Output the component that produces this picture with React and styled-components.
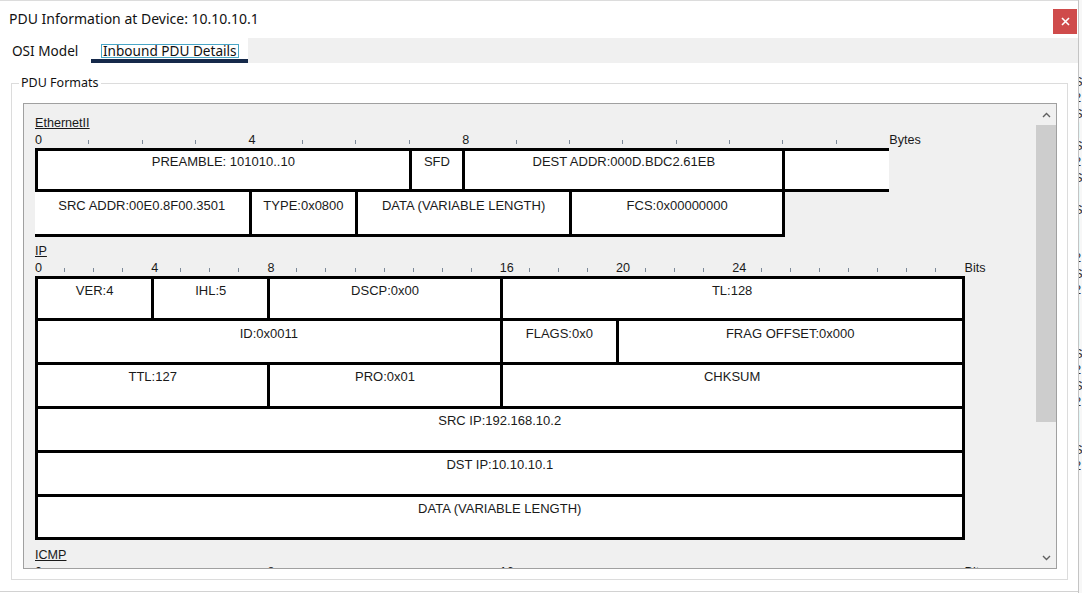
import React from "react";
import styled, { createGlobalStyle } from "styled-components";

const GlobalStyle = createGlobalStyle`
  html, body {
    margin: 0;
    padding: 0;
    background: #ffffff;
  }
  * {
    box-sizing: border-box;
  }
`;

const ethernet = {
  name: "EthernetII",
  units: 16,
  unitWidth: 53.4,
  unitName: "Bytes",
  labels: [0, 4, 8],
  rows: [
    {
      height: 41,
      pad: 4,
      cells: [
        { span: 7, text: "PREAMBLE: 101010..10" },
        { span: 1, text: "SFD" },
        { span: 6, text: "DEST ADDR:000D.BDC2.61EB" },
        { span: 2, text: "", openRight: true },
      ],
    },
    {
      height: 45,
      pad: 7,
      cells: [
        { span: 4, text: "SRC ADDR:00E0.8F00.3501", openLeft: true },
        { span: 2, text: "TYPE:0x0800" },
        { span: 4, text: "DATA (VARIABLE LENGTH)" },
        { span: 4, text: "FCS:0x00000000" },
      ],
    },
  ],
};

const ip = {
  name: "IP",
  units: 32,
  unitWidth: 29.06,
  unitName: "Bits",
  labels: [0, 4, 8, 16, 20, 24],
  rows: [
    {
      height: 42,
      pad: 5,
      cells: [
        { span: 4, text: "VER:4" },
        { span: 4, text: "IHL:5" },
        { span: 8, text: "DSCP:0x00" },
        { span: 16, text: "TL:128", last: true },
      ],
    },
    {
      height: 44,
      pad: 6,
      cells: [
        { span: 16, text: "ID:0x0011" },
        { span: 4, text: "FLAGS:0x0" },
        { span: 12, text: "FRAG OFFSET:0x000", last: true },
      ],
    },
    {
      height: 44,
      pad: 5,
      cells: [
        { span: 8, text: "TTL:127" },
        { span: 8, text: "PRO:0x01" },
        { span: 16, text: "CHKSUM", last: true },
      ],
    },
    { height: 44, pad: 5, cells: [{ span: 32, text: "SRC IP:192.168.10.2", last: true }] },
    { height: 44, pad: 5, cells: [{ span: 32, text: "DST IP:10.10.10.1", last: true }] },
    { height: 43, pad: 5, cells: [{ span: 32, text: "DATA (VARIABLE LENGTH)", last: true }] },
  ],
};

// only the heading and the top of the ruler are in view
const icmp = {
  name: "ICMP",
  units: 32,
  unitWidth: 29.06,
  unitName: "Bits",
  labels: [0, 8, 16],
  rows: [],
};

const Page = styled.div`
  display: flex;
  width: 1082px;
  height: 593px;
  overflow: hidden;
`;

const Window = styled.div`
  width: 1078px;
  height: 593px;
  display: flex;
  flex-direction: column;
  background: #ffffff;
  border-top: 1px solid #dcdcdc;
`;

const TitleBar = styled.div`
  height: 37px;
  display: flex;
  justify-content: space-between;
  align-items: flex-start;
  padding: 0 1px 0 9px;
`;

const Title = styled.div`
  font-family: "Noto Sans", "Open Sans", sans-serif;
  font-size: 14px;
  line-height: 18px;
  margin-top: 9px;
  color: #111111;
`;

const CloseButton = styled.button`
  width: 24px;
  height: 25px;
  margin-top: 8px;
  border: none;
  padding: 0;
  background: #cf4b4b;
  display: flex;
  align-items: center;
  justify-content: center;
`;

const TabBar = styled.div`
  height: 25px;
  display: flex;
  font-family: "Noto Sans", "Open Sans", sans-serif;
  font-size: 13.6px;
  color: #111111;
`;

const Tab = styled.div`
  width: ${(p) => p.$width}px;
  height: 25px;
  padding-left: ${(p) => p.$pad}px;
  padding-top: 5px;
  line-height: 15px;
  background: #ffffff;
  border-bottom: ${(p) => (p.$active ? "4px solid #15294a" : "none")};
`;

const FocusText = styled.span`
  display: inline-block;
  border: 1px solid #4aa6c6;
  padding: 0 1px 0 1px;
  margin-top: 1px;
  line-height: 11px;
  height: 14px;
`;

const TabFiller = styled.div`
  flex: 1;
  background: #f0f0f0;
`;

const Group = styled.fieldset`
  margin: 12px 10px 0 11px;
  padding: 12px 10px 10px 11px;
  border: 1px solid #dcdcdc;
  min-width: 0;
`;

const Legend = styled.legend`
  font-family: "Noto Sans", "Open Sans", sans-serif;
  font-size: 12.5px;
  line-height: 16px;
  color: #111111;
  padding: 0 2px;
  margin-left: -4px;
`;

const Panel = styled.div`
  height: 466px;
  display: flex;
  border: 1px solid #a0a0a0;
  background: #f0f0f0;
`;

const ScrollView = styled.div`
  flex: 1;
  overflow: hidden;
  padding: 11px 0 0 11px;
  font-family: "Liberation Sans", Arial, sans-serif;
  font-size: 12.6px;
  color: #1a1a1a;
`;

const Scrollbar = styled.div`
  width: 20px;
  display: flex;
  flex-direction: column;
  background: #f0f0f0;
`;

const ArrowZone = styled.div`
  height: 21px;
  display: flex;
  align-items: center;
  justify-content: center;
`;

const Thumb = styled.div`
  height: 297px;
  background: #cdcdcd;
`;

const TrackRest = styled.div`
  flex: 1;
`;

const Section = styled.div`
  margin-top: ${(p) => p.$gap}px;
`;

const SectionName = styled.div`
  height: 15px;
  line-height: 17px;
  text-decoration: underline;
`;

const Ruler = styled.div`
  display: grid;
  grid-template-columns: repeat(${(p) => p.$units}, ${(p) => p.$unit}px) auto;
  height: 18px;
`;

const RulerCell = styled.div`
  display: flex;
  align-items: flex-end;
  padding-bottom: 4px;
  white-space: nowrap;
`;

const RulerNum = styled.span`
  line-height: 12px;
  margin-bottom: -2px;
`;

const Tick = styled.span`
  width: 1px;
  height: 4px;
  background: #7d8a99;
`;

const Fields = styled.div`
  display: grid;
  grid-template-columns: repeat(${(p) => p.$units}, ${(p) => p.$unit}px);
  grid-template-rows: ${(p) => p.$rows};
  padding-bottom: 3px;
`;

const Field = styled.div`
  grid-column: span ${(p) => p.$span};
  border: 3px solid #000000;
  border-left-width: ${(p) => (p.$openLeft ? 0 : 3)}px;
  border-right-width: ${(p) => (p.$openRight ? 0 : 3)}px;
  margin-right: ${(p) => (p.$openRight || p.$last ? 0 : -3)}px;
  margin-bottom: -3px;
  background: #ffffff;
  padding-top: ${(p) => p.$pad}px;
  text-align: center;
  font-size: 13px;
  line-height: 14px;
  white-space: nowrap;
  overflow: hidden;
`;

const BottomEdge = styled.div`
  margin-top: auto;
  height: 2px;
  border-top: 1px solid #d2d2d2;
`;

const Backdrop = styled.div`
  width: 4px;
  height: 593px;
  background: #f7f7f7;
  border-left: 1px solid #c4c4c4;
  overflow: hidden;
  font-family: "Liberation Sans", Arial, sans-serif;
  font-size: 13px;
  line-height: 16px;
  padding-top: 74px;
`;

const BackGlyph = styled.div`
  margin-left: -5px;
  color: ${(p) => p.$color};
`;

const Chevron = ({ up }) => (
  <svg width="9" height="6" viewBox="0 0 9 6">
    <path
      d={up ? "M1 5 L4.5 1.5 L8 5" : "M1 1 L4.5 4.5 L8 1"}
      fill="none"
      stroke="#606060"
      strokeWidth="1.4"
    />
  </svg>
);

const PduSection = ({ pdu, gap }) => {
  const ruler = [];
  for (let i = 0; i < pdu.units; i++) {
    ruler.push(
      <RulerCell key={i}>
        {pdu.labels.includes(i) ? <RulerNum>{i}</RulerNum> : <Tick />}
      </RulerCell>
    );
  }
  ruler.push(
    <RulerCell key="unit">
      <RulerNum>{pdu.unitName}</RulerNum>
    </RulerCell>
  );

  return (
    <Section $gap={gap}>
      <SectionName>{pdu.name}</SectionName>
      <Ruler $units={pdu.units} $unit={pdu.unitWidth}>
        {ruler}
      </Ruler>
      {pdu.rows.length > 0 && (
        <Fields
          $units={pdu.units}
          $unit={pdu.unitWidth}
          $rows={pdu.rows.map((r) => `${r.height}px`).join(" ")}
        >
          {pdu.rows.map((row, ri) =>
            row.cells.map((cell, ci) => (
              <Field
                key={`${ri}-${ci}`}
                $span={cell.span}
                $pad={row.pad}
                $openLeft={cell.openLeft}
                $openRight={cell.openRight}
                $last={cell.last}
              >
                {cell.text}
              </Field>
            ))
          )}
        </Fields>
      )}
    </Section>
  );
};

export default function App() {
  const glyphs = [
    ["S", "#333"], ["2", "#333"], ["S", "#333"], ["▌", "#4a2a5a"], ["S", "#333"],
    ["2", "#333"], ["S", "#333"], ["▌", "#4a2a5a"], ["S", "#333"], ["▌", "#4a2a5a"],
    ["▌", "#4a2a5a"], ["2", "#333"], ["S", "#333"], ["2", "#333"], ["▌", "#4a2a5a"],
    ["▌", "#4a2a5a"], ["▌", "#4a2a5a"], ["S", "#333"], ["2", "#333"], ["S", "#333"],
    ["2", "#333"], ["▌", "#15294a"], ["▌", "#15294a"], ["S", "#333"], ["2", "#333"],
  ];

  return (
    <>
      <GlobalStyle />
      <Page>
        <Window>
          <TitleBar>
            <Title>PDU Information at Device: 10.10.10.1</Title>
            <CloseButton aria-label="Close">
              <svg width="9" height="9" viewBox="0 0 9 9">
                <path d="M1 1 L8 8 M8 1 L1 8" stroke="#ffffff" strokeWidth="1.6" />
              </svg>
            </CloseButton>
          </TitleBar>
          <TabBar>
            <Tab $width={91} $pad={12}>OSI Model</Tab>
            <Tab $width={157} $pad={10} $active>
              <FocusText>Inbound PDU Details</FocusText>
            </Tab>
            <TabFiller />
          </TabBar>
          <Group>
            <Legend>PDU Formats</Legend>
            <Panel>
              <ScrollView>
                <PduSection pdu={ethernet} gap={0} />
                <PduSection pdu={ip} gap={6} />
                <PduSection pdu={icmp} gap={7} />
              </ScrollView>
              <Scrollbar>
                <ArrowZone>
                  <Chevron up />
                </ArrowZone>
                <Thumb />
                <TrackRest />
                <ArrowZone>
                  <Chevron />
                </ArrowZone>
              </Scrollbar>
            </Panel>
          </Group>
          <BottomEdge />
        </Window>
        <Backdrop>
          {glyphs.map(([g, c], i) => (
            <BackGlyph key={i} $color={c}>
              {g}
            </BackGlyph>
          ))}
        </Backdrop>
      </Page>
    </>
  );
}
